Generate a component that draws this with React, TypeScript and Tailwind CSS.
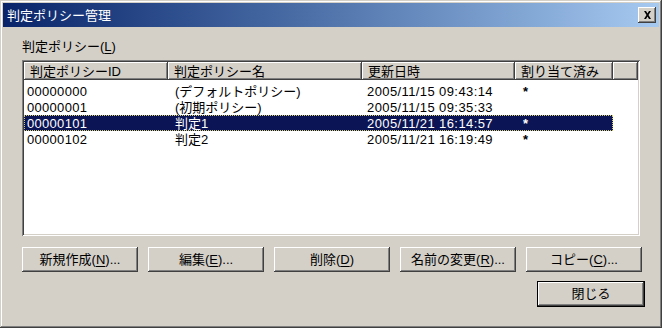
import React from 'react';

const font = { fontFamily: '"Liberation Sans", "Noto Sans CJK JP", sans-serif' };

const columns = [
  { label: '判定ポリシーID', width: 'w-[144px]' },
  { label: '判定ポリシー名', width: 'w-[194px]' },
  { label: '更新日時', width: 'w-[153px]' },
  { label: '割り当て済み', width: 'w-[98px]' },
];

const rows = [
  { id: '00000000', name: '(デフォルトポリシー)', date: '2005/11/15 09:43:14', used: '*' },
  { id: '00000001', name: '(初期ポリシー)', date: '2005/11/15 09:35:33', used: '' },
  { id: '00000101', name: '判定1', date: '2005/11/21 16:14:57', used: '*', selected: true },
  { id: '00000102', name: '判定2', date: '2005/11/21 16:19:49', used: '*' },
];

// classic raised 3D button edge
const raised =
  'bg-[#d4d0c8] shadow-[inset_-1px_-1px_#404040,inset_1px_1px_#ffffff,inset_-2px_-2px_#808080,inset_2px_2px_#d4d0c8]';

function Hotkey({ before, k, after }: { before: string; k: string; after?: string }) {
  return (
    <span>
      {before}(<span className="underline underline-offset-2">{k}</span>){after}
    </span>
  );
}

function Btn({ children, def }: { children: React.ReactNode; def?: boolean }) {
  return (
    <div
      className={`flex items-center justify-center text-[13px] text-black ${raised} ${
        def ? 'w-[106px] h-[24px] outline outline-1 outline-black' : 'w-[116px] h-[25px]'
      }`}
    >
      {children}
    </div>
  );
}

export default function App() {
  return (
    <div
      className="w-[662px] h-[328px] bg-[#d4d0c8] p-[3px] shadow-[inset_-1px_-1px_#404040,inset_1px_1px_#d4d0c8,inset_-2px_-2px_#808080,inset_2px_2px_#ffffff] text-black"
      style={font}
    >
      {/* title bar */}
      <div className="h-[24px] flex items-center justify-between bg-gradient-to-r from-[#0a246a] to-[#a6caf0] pl-[4px] pr-[3px]">
        <span className="text-white text-[13px] leading-none">判定ポリシー管理</span>
        <div className={`w-[18px] h-[16px] flex items-center justify-center ${raised}`}>
          <svg width="9" height="8" viewBox="0 0 9 8">
            <path d="M1 0h2l1.5 2.5L6 0h2L5.5 4L8 8H6L4.5 5.5L3 8H1l2.5-4z" fill="#000" />
          </svg>
        </div>
      </div>

      <div className="pl-[19px] pt-[12px]">
        <div className="text-[13px] leading-[16px] h-[18px]">
          <Hotkey before="判定ポリシー" k="L" />
        </div>

        {/* list view */}
        <div className="mt-[3px] w-[618px] h-[176px] bg-white shadow-[inset_1px_1px_#808080,inset_-1px_-1px_#ffffff,inset_2px_2px_#404040,inset_-2px_-2px_#d4d0c8] p-[2px] overflow-hidden">
          <div className="flex h-[18px]">
            {columns.map((c) => (
              <div
                key={c.label}
                className={`${c.width} ${raised} flex items-center pl-[6px] text-[13px] leading-none`}
              >
                {c.label}
              </div>
            ))}
            <div className={`flex-1 ${raised}`} />
          </div>
          <div className="pt-[3px]">
            {rows.map((r) => (
              <div
                key={r.id}
                className={`flex h-[16px] items-center w-[589px] text-[13px] leading-none ${
                  r.selected
                    ? 'bg-[#0b1454] text-white border border-dotted border-[#d8d070]'
                    : 'border border-transparent'
                }`}
              >
                <div className="w-[144px] pl-[2px] tracking-[0.3px]">{r.id}</div>
                <div className="w-[194px] pl-[6px]">{r.name}</div>
                <div className="w-[153px] pl-[4px] tracking-[0.4px]">{r.date}</div>
                <div className="w-[96px] pl-[7px] font-bold">{r.used}</div>
              </div>
            ))}
          </div>
        </div>

        {/* action buttons */}
        <div className="mt-[11px] flex gap-[10px]">
          <Btn>
            <Hotkey before="新規作成" k="N" after="..." />
          </Btn>
          <Btn>
            <Hotkey before="編集" k="E" after="..." />
          </Btn>
          <Btn>
            <Hotkey before="削除" k="D" />
          </Btn>
          <Btn>
            <Hotkey before="名前の変更" k="R" after="..." />
          </Btn>
          <Btn>
            <Hotkey before="コピー" k="C" after="..." />
          </Btn>
        </div>

        <div className="mt-[10px] flex w-[622px] justify-end">
          <Btn def>閉じる</Btn>
        </div>
      </div>
    </div>
  );
}
